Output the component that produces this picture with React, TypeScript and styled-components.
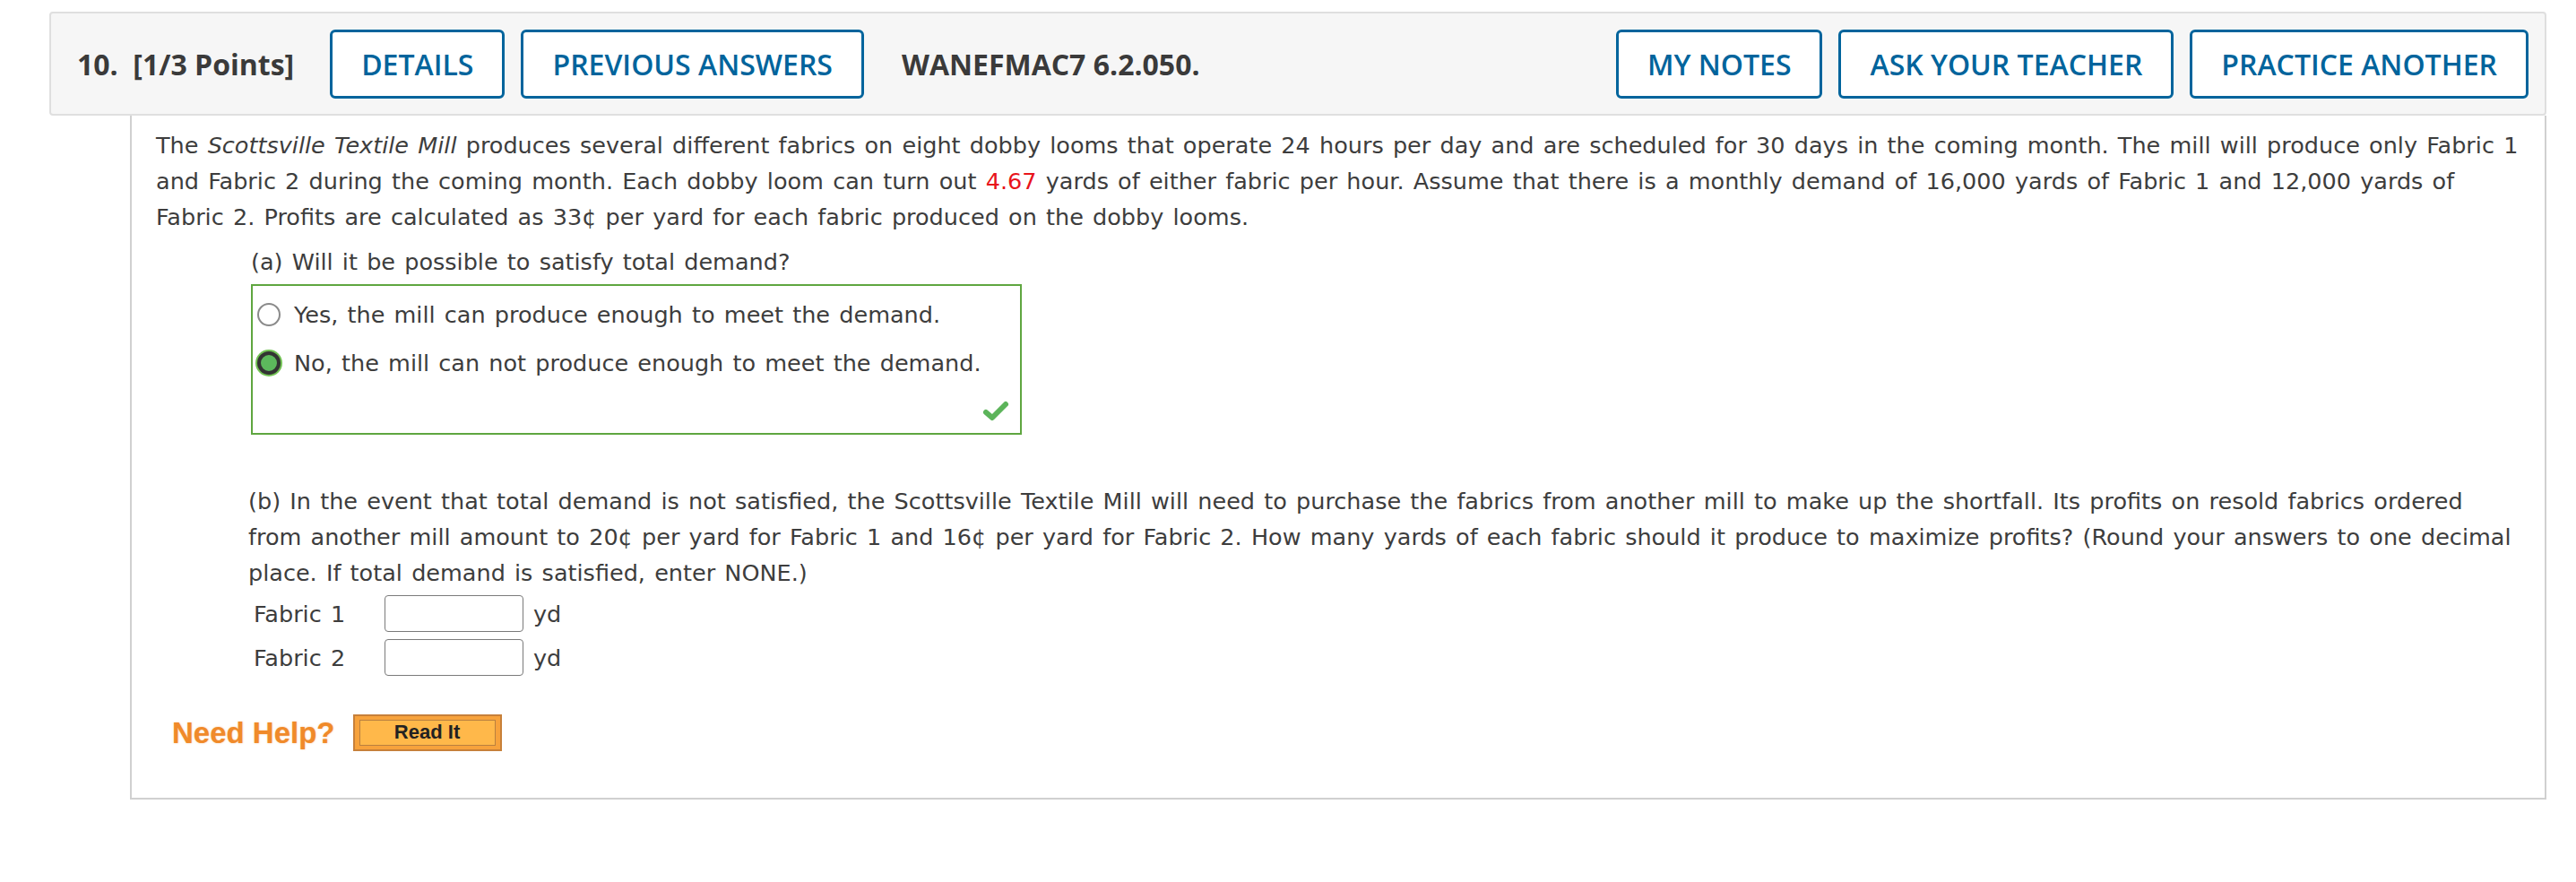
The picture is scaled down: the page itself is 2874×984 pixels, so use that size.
import React from 'react';
import styled, { createGlobalStyle } from 'styled-components';

const GlobalStyle = createGlobalStyle`
  html, body {
    margin: 0;
    padding: 0;
    background: #fff;
  }
`;

const Page = styled.div`
  padding: 13px 33px 0 55px;
  font-family: 'DejaVu Sans', Verdana, sans-serif;
  color: #3d3d3d;
`;

const QuestionHeader = styled.div`
  display: flex;
  align-items: center;
  height: 112px;
  padding: 0 18px 0 29px;
  background: #f6f6f6;
  border: 2px solid #dfdfdf;
  border-radius: 4px;
  font-family: 'Open Sans', 'Liberation Sans', sans-serif;
`;

const QuestionNumber = styled.span`
  font-size: 32px;
  font-weight: 700;
  color: #3a3a3a;
  margin-right: 40px;
  white-space: pre;
`;

const Code = styled.span`
  font-size: 32px;
  font-weight: 700;
  color: #3a3a3a;
  margin-left: 42px;
`;

const HeaderButton = styled.button<{ $pushRight?: boolean }>`
  height: 77px;
  padding: 0 32px;
  margin-left: ${({ $pushRight }) => ($pushRight ? 'auto' : '18px')};
  border: 3px solid #00649c;
  border-radius: 6px;
  background: #fff;
  color: #00649c;
  font-family: 'Open Sans', 'Liberation Sans', sans-serif;
  font-size: 32px;
  font-weight: 600;
  text-transform: uppercase;
  cursor: pointer;

  &:first-of-type {
    margin-left: 0;
  }
`;

const Panel = styled.div`
  margin-left: 90px;
  padding: 13px 21px 52px 27px;
  border: 2px solid #d0d0d0;
  border-top: none;
  font-size: 25.5px;
  word-spacing: 2.1px;
  line-height: 40px;
`;

const Paragraph = styled.p`
  margin: 0;
`;

const Red = styled.span`
  color: #e8141b;
`;

const PartA = styled.div`
  margin: 10px 0 0 106px;
`;

const RadioBox = styled.div`
  display: flex;
  flex-direction: column;
  width: 860px;
  height: 168px;
  margin-top: 5px;
  padding: 5px 10px 12px 5px;
  box-sizing: border-box;
  border: 2px solid #5fa640;
`;

const RadioRow = styled.label`
  display: flex;
  align-items: center;
  gap: 15px;
  height: 54px;
`;

const Radio = styled.span<{ $checked?: boolean }>`
  width: 26px;
  height: 26px;
  box-sizing: border-box;
  border-radius: 50%;
  flex: none;
  border: ${({ $checked }) => ($checked ? '4px solid #333' : '2px solid #8a8a8a')};
  background: ${({ $checked }) => ($checked ? '#5cb85c' : '#fff')};
  box-shadow: ${({ $checked }) => ($checked ? '0 0 0 2px #72c254' : 'none')};
`;

const CheckRow = styled.div`
  display: flex;
  justify-content: flex-end;
  margin-top: auto;
`;

const PartB = styled.div`
  margin: 54px 3px 0 103px;
`;

const FieldRow = styled.div`
  display: flex;
  align-items: center;
  height: 41px;
  margin: 5px 0 0 6px;

  & + & {
    margin-top: 8px;
  }
`;

const FieldLabel = styled.span`
  width: 146px;
`;

const Input = styled.input`
  width: 155px;
  height: 41px;
  box-sizing: border-box;
  border: 1px solid #7a7a7a;
  border-radius: 4px;
  margin-right: 11px;
`;

const HelpRow = styled.div`
  display: flex;
  align-items: center;
  gap: 20px;
  margin: 43px 0 0 18px;
`;

const NeedHelp = styled.span`
  font-family: 'Liberation Sans', Arial, sans-serif;
  font-weight: 700;
  font-size: 33px;
  line-height: 41px;
  word-spacing: 0;
  color: #f08a2a;
  text-shadow: 0 0 2px rgba(240, 138, 42, 0.5);
`;

const ReadItButton = styled.button`
  width: 166px;
  height: 41px;
  padding: 0;
  border: 2px solid #c7803a;
  background: #f7a23c;
  cursor: pointer;
  display: flex;
  align-items: stretch;
  box-sizing: border-box;
`;

const ReadItInner = styled.span`
  flex: 1;
  margin: 4px 5px;
  border: 1px solid #b9803f;
  background: #ffb84a;
  font-family: 'Liberation Sans', Arial, sans-serif;
  font-weight: 700;
  font-size: 22px;
  line-height: 26px;
  word-spacing: 0;
  color: #222;
`;

function CheckMark() {
  return (
    <svg width="34" height="26" viewBox="0 0 34 26">
      <path d="M6 15 L13 21 L28 6" fill="none" stroke="#5cb45a" strokeWidth="6" strokeLinecap="round" strokeLinejoin="round" />
    </svg>
  );
}

export default function App() {
  return (
    <>
      <GlobalStyle />
      <Page>
        <QuestionHeader>
          <QuestionNumber>{'10.  [1/3 Points]'}</QuestionNumber>
          <HeaderButton>Details</HeaderButton>
          <HeaderButton>Previous Answers</HeaderButton>
          <Code>WANEFMAC7 6.2.050.</Code>
          <HeaderButton $pushRight>My Notes</HeaderButton>
          <HeaderButton>Ask Your Teacher</HeaderButton>
          <HeaderButton>Practice Another</HeaderButton>
        </QuestionHeader>
        <Panel>
          <Paragraph>
            The <i>Scottsville Textile Mill</i> produces several different fabrics on eight dobby looms that operate 24
            hours per day and are scheduled for 30 days in the coming month. The mill will produce only Fabric 1 and
            Fabric 2 during the coming month. Each dobby loom can turn out <Red>4.67</Red> yards of either fabric per
            hour. Assume that there is a monthly demand of 16,000 yards of Fabric 1 and 12,000 yards of Fabric 2.
            Profits are calculated as 33¢ per yard for each fabric produced on the dobby looms.
          </Paragraph>
          <PartA>
            (a) Will it be possible to satisfy total demand?
            <RadioBox>
              <RadioRow>
                <Radio />
                Yes, the mill can produce enough to meet the demand.
              </RadioRow>
              <RadioRow>
                <Radio $checked />
                No, the mill can not produce enough to meet the demand.
              </RadioRow>
              <CheckRow>
                <CheckMark />
              </CheckRow>
            </RadioBox>
          </PartA>
          <PartB>
            (b) In the event that total demand is not satisfied, the Scottsville Textile Mill will need to purchase the
            fabrics from another mill to make up the shortfall. Its profits on resold fabrics ordered from another mill
            amount to 20¢ per yard for Fabric 1 and 16¢ per yard for Fabric 2. How many yards of each fabric should it
            produce to maximize profits? (Round your answers to one decimal place. If total demand is satisfied, enter
            NONE.)
            <FieldRow>
              <FieldLabel>Fabric 1</FieldLabel>
              <Input type="text" />
              yd
            </FieldRow>
            <FieldRow>
              <FieldLabel>Fabric 2</FieldLabel>
              <Input type="text" />
              yd
            </FieldRow>
          </PartB>
          <HelpRow>
            <NeedHelp>Need Help?</NeedHelp>
            <ReadItButton>
              <ReadItInner>Read It</ReadItInner>
            </ReadItButton>
          </HelpRow>
        </Panel>
      </Page>
    </>
  );
}
